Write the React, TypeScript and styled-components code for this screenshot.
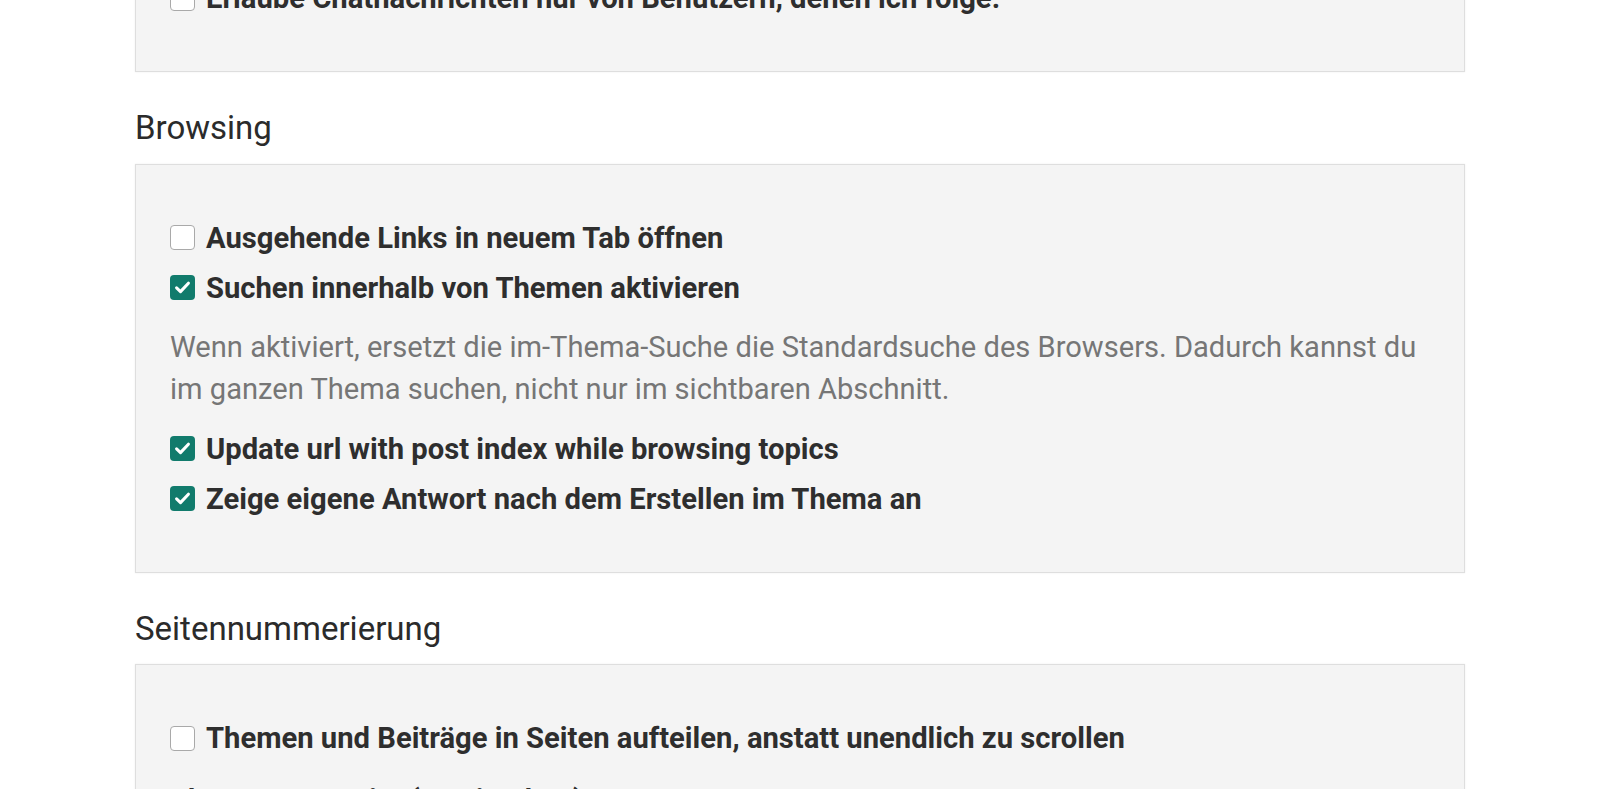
import React from 'react';
import styled, { createGlobalStyle } from 'styled-components';

const GlobalStyle = createGlobalStyle`
  html, body {
    margin: 0;
    padding: 0;
    background: #ffffff;
    overflow: hidden;
  }
  body {
    font-family: Roboto, 'Liberation Sans', Arial, sans-serif;
    color: #333333;
  }
`;

interface Option {
  label: string;
  checked: boolean;
  description?: string;
}

interface Section {
  title?: string;
  options: Option[];
  extraLabel?: string;
}

const sections: Section[] = [
  {
    options: [
      {
        label: 'Erlaube Chatnachrichten nur von Benutzern, denen ich folge.',
        checked: false,
      },
    ],
  },
  {
    title: 'Browsing',
    options: [
      { label: 'Ausgehende Links in neuem Tab öffnen', checked: false },
      {
        label: 'Suchen innerhalb von Themen aktivieren',
        checked: true,
        description:
          'Wenn aktiviert, ersetzt die im-Thema-Suche die Standardsuche des Browsers. Dadurch kannst du im ganzen Thema suchen, nicht nur im sichtbaren Abschnitt.',
      },
      { label: 'Update url with post index while browsing topics', checked: true },
      { label: 'Zeige eigene Antwort nach dem Erstellen im Thema an', checked: true },
    ],
  },
  {
    title: 'Seitennummerierung',
    options: [
      {
        label: 'Themen und Beiträge in Seiten aufteilen, anstatt unendlich zu scrollen',
        checked: false,
      },
    ],
    extraLabel: 'Themen pro Seite (Maximal 30)',
  },
];

function Preferences() {
  return (
    <Page>
      {sections.map((section, i) => (
        <React.Fragment key={i}>
          {section.title && <SectionTitle>{section.title}</SectionTitle>}
          <Panel>
            {section.options.map((opt) => (
              <React.Fragment key={opt.label}>
                <OptionRow>
                  <Box checked={opt.checked}>
                    {opt.checked && <CheckMark />}
                  </Box>
                  <Label>{opt.label}</Label>
                </OptionRow>
                {opt.description && <Description>{opt.description}</Description>}
              </React.Fragment>
            ))}
            {section.extraLabel && <FieldLabel>{section.extraLabel}</FieldLabel>}
          </Panel>
        </React.Fragment>
      ))}
    </Page>
  );
}

const CheckMark = () => (
  <svg width="19" height="19" viewBox="0 0 18 18" fill="none">
    <path
      d="M3.4 9.4 L7.1 12.9 L14.6 4.9"
      stroke="#ffffff"
      strokeWidth="2.9"
      strokeLinecap="round"
      strokeLinejoin="round"
    />
  </svg>
);

export default function App() {
  return (
    <>
      <GlobalStyle />
      <Preferences />
    </>
  );
}

const Page = styled.div`
  padding: 0 135px;
  margin-top: -76px;
`;

const SectionTitle = styled.h2`
  margin: 36px 0 16px;
  font-size: 33px;
  font-weight: 400;
  line-height: 1.2;
  color: #2b2b2b;
`;

const Panel = styled.section`
  background: #f4f4f4;
  border: 1px solid #dedede;
  box-shadow: 0 0 2px rgba(0, 0, 0, 0.07);
  padding: 48px 34px;
  display: flex;
  flex-direction: column;
`;

const OptionRow = styled.label`
  display: flex;
  align-items: center;
  gap: 11px;
  height: 50px;
`;

const Box = styled.span<{ checked: boolean }>`
  flex: none;
  width: 25px;
  height: 25px;
  box-sizing: border-box;
  border-radius: 4px;
  display: flex;
  align-items: center;
  justify-content: center;
  background: ${(p) => (p.checked ? '#117b6c' : '#ffffff')};
  border: ${(p) => (p.checked ? 'none' : '1px solid #a9a9a9')};
`;

const Label = styled.span`
  font-size: 29.2px;
  font-weight: 700;
  color: #2e2e2e;
  white-space: nowrap;
`;

const Description = styled.p`
  margin: 13px 0 14px;
  font-size: 29.1px;
  line-height: 42px;
  color: #767676;
`;

const FieldLabel = styled.div`
  margin-top: 20px;
  font-size: 29.2px;
  font-weight: 700;
  color: #2e2e2e;
`;
